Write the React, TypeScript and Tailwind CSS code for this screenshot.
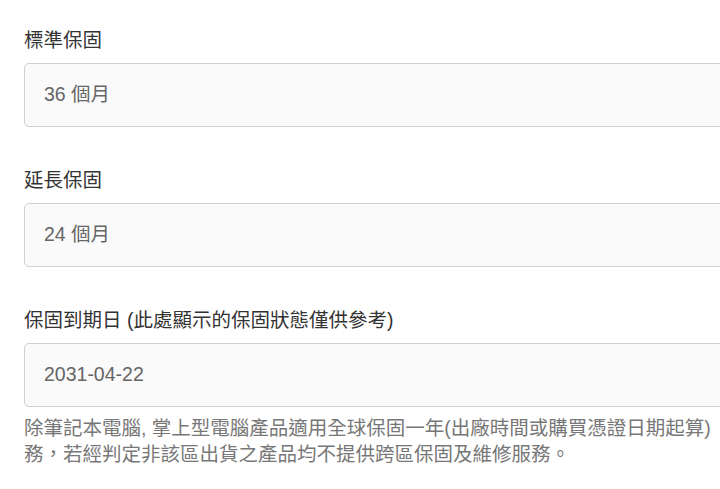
import React from "react";

const font = { fontFamily: '"Liberation Sans", "Noto Sans CJK TC", sans-serif' };

function Field({ label, value }: { label: string; value: string }) {
  return (
    <div className="mb-[40px]">
      <div className="text-[19.5px] leading-[26px] text-[#333] mb-[10px]">{label}</div>
      <div className="h-[64px] border border-[#d0d0d0] rounded-[5px] bg-[#fafafa] pl-[19px] flex items-center text-[19.5px] text-[#666]">
        {value}
      </div>
    </div>
  );
}

export default function App() {
  return (
    <div className="w-[720px] h-[489px] overflow-hidden bg-white" style={font}>
      <div className="w-[800px] pl-6 pt-[27px]">
        <Field label="標準保固" value="36 個月" />
        <Field label="延長保固" value="24 個月" />
        <div>
          <div className="text-[19.5px] leading-[26px] text-[#333] mb-[10px]">保固到期日 (此處顯示的保固狀態僅供參考)</div>
          <div className="h-[64px] border border-[#d0d0d0] rounded-[5px] bg-[#fafafa] pl-[19px] flex items-center text-[19.5px] text-[#666]">
            2031-04-22
          </div>
          <div className="mt-[8px] text-[19.5px] leading-[26px] text-[#777] whitespace-nowrap">
            <div>除筆記本電腦, 掌上型電腦產品適用全球保固一年(出廠時間或購買憑證日期起算)</div>
            <div>務，若經判定非該區出貨之產品均不提供跨區保固及維修服務。</div>
          </div>
        </div>
      </div>
    </div>
  );
}
